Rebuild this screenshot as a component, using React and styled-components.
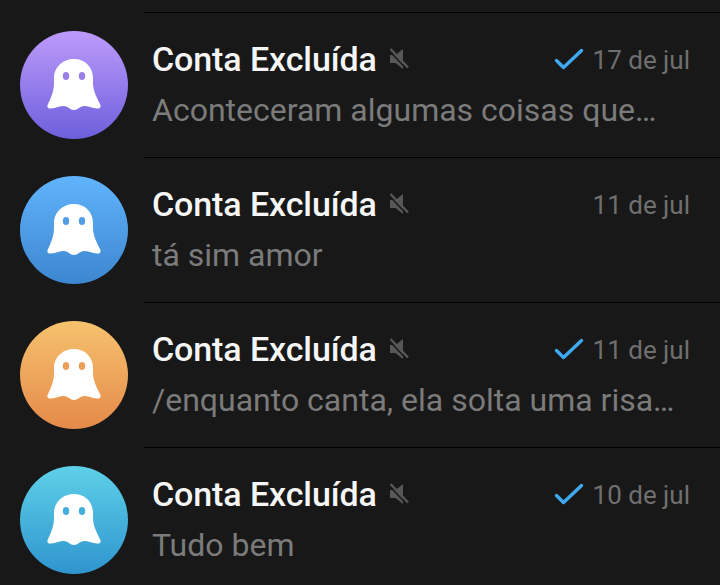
import styled, { createGlobalStyle } from 'styled-components';

const GlobalStyle = createGlobalStyle`
  html, body {
    margin: 0;
    padding: 0;
    height: 100%;
    overflow: hidden;
    background: #181818;
  }
`

const List = styled.div`
  display: flex;
  flex-direction: column;
  padding-top: 12px;
  width: 720px;
  height: 585px;
  box-sizing: border-box;
  overflow: hidden;
  background: #181818;
  font-family: Roboto, "Liberation Sans", sans-serif;
`

const Row = styled.div`
  display: flex;
  flex: none;
  height: 145px;
  box-sizing: border-box;
`

const Avatar = styled.div`
  flex: none;
  display: flex;
  width: 108px;
  height: 108px;
  margin: 19px 24px 0 20px;
  border-radius: 50%;
  background: linear-gradient(180deg, ${props => props.$from} 0%, ${props => props.$to} 100%);
`

const Body = styled.div`
  flex: 1;
  min-width: 0;
  padding: 25px 30px 0 0;
`

const Divider = styled.div`
  height: 1px;
  margin-top: -25px;
  margin-right: -30px;
  margin-bottom: 24px;
  margin-left: -8px;
  background: #000;
`

const TopLine = styled.div`
  display: flex;
  align-items: center;
  height: 44px;
`

const Name = styled.span`
  font-size: 34px;
  font-weight: 500;
  letter-spacing: -0.1px;
  color: #f6f6f6;
  white-space: nowrap;
`

const MuteIcon = styled.svg`
  width: 24px;
  height: 24px;
  margin-left: 10px;
`

const Status = styled.div`
  display: flex;
  align-items: center;
  margin-left: auto;
  padding-top: 1px;
`

const CheckIcon = styled.svg`
  width: 30px;
  height: 24px;
  margin-right: 9px;
`

const Time = styled.span`
  font-size: 26px;
  color: #6f6f6f;
  white-space: nowrap;
`

const Preview = styled.div`
  margin-top: 11px;
  font-size: 32px;
  line-height: 36px;
  color: #7b7b7b;
  white-space: nowrap;
`

function Ghost({ eye }) {
  return (
    <svg width="108" height="108" viewBox="0 0 108 108">
      <path
        fill="#fff"
        d="M54 28C43 28 34 36 34 47V52C34 60 31 67 28 73C26.5 76 28 78 31 77.5C36 77 40 75 44 75C48 75 50 79 54 79C58 79 60 75 64 75C68 75 72 77 77 77.5C80 78 81.5 76 80 73C77 67 73 60 73 52V47C73 36 65 28 54 28Z"
      />
      <ellipse cx="46" cy="45" rx="3.2" ry="4" fill={eye} />
      <ellipse cx="62" cy="45" rx="3.2" ry="4" fill={eye} />
    </svg>
  );
}

function Mute() {
  return (
    <MuteIcon viewBox="0 0 24 24">
      <path fill="#575757" d="M3 8H8.5L16 2V22L8.5 16H3Z" />
      <path stroke="#181818" strokeWidth="1.6" d="M3 4.5L20 22.5" />
      <path stroke="#575757" strokeWidth="2.4" d="M3.5 2L21 20.5" />
    </MuteIcon>
  );
}

function Check() {
  return (
    <CheckIcon viewBox="0 0 30 24">
      <path fill="none" stroke="#3fa9f0" strokeWidth="3.4" strokeLinecap="round" strokeLinejoin="round" d="M2.5 12.5L9.5 19.5L27.5 2.5" />
    </CheckIcon>
  );
}

const chats = [
  { from: '#bd9bfb', to: '#6d5fdc', eye: '#9a7fe8', date: '17 de jul', read: true, text: 'Aconteceram algumas coisas que…' },
  { from: '#60b4fb', to: '#3d86d0', eye: '#4f9ce8', date: '11 de jul', read: false, text: 'tá sim amor' },
  { from: '#f6c26e', to: '#e58a4a', eye: '#ee9f58', date: '11 de jul', read: true, text: '/enquanto canta, ela solta uma risa…' },
  { from: '#5ed0e8', to: '#2f95cf', eye: '#43aedb', date: '10 de jul', read: true, text: 'Tudo bem' },
];

function App() {
  return (
    <>
      <GlobalStyle />
      <List>
        {chats.map((chat, i) => (
          <Row key={i}>
            <Avatar $from={chat.from} $to={chat.to}>
              <Ghost eye={chat.eye} />
            </Avatar>
            <Body>
              <Divider />
              <TopLine>
                <Name>Conta Excluída</Name>
                <Mute />
                <Status>
                  {chat.read && <Check />}
                  <Time>{chat.date}</Time>
                </Status>
              </TopLine>
              <Preview>{chat.text}</Preview>
            </Body>
          </Row>
        ))}
      </List>
    </>
  );
}

export default App;
